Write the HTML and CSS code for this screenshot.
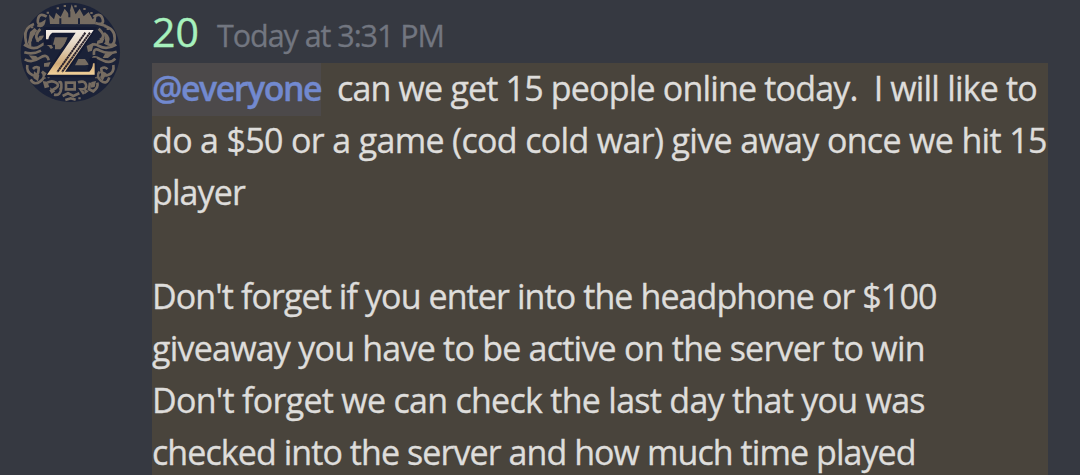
FILE: index.html
```html
<!DOCTYPE html>
<html lang="en">
<head>
<meta charset="utf-8">
<title>Message</title>
<link rel="stylesheet" href="styles.css">
</head>
<body>
<article class="message">
<svg class="avatar" viewBox="0 0 360 330" aria-label="Avatar">
<defs><linearGradient id="gold" x1="0" y1="0" x2="0" y2="1"><stop stop-color="#f4eee8"/><stop offset=".42" stop-color="#dfcdb5"/><stop offset=".75" stop-color="#d0aa78"/><stop offset="1" stop-color="#f1d09a"/></linearGradient></defs>
<circle cx="181" cy="157" r="149" fill="#1b2238"/>
<g class="ornament">
<path class="solid" d="M120 72l-3-29 15 15 6-20 14 13 12-25 13 17 8-30 12 30 12-17 12 23 15-13 12 22 12-12-4 27z"/>
<path d="M151 72V55M178 52V34M207 72V55" stroke="#1b2238" stroke-width="6"/>
<path d="M110 50Q88 36 84 58T102 66Q99 83 82 76M72 72Q43 82 46 113T60 137Q56 115 74 98M91 87Q69 110 87 124M42 134Q72 153 92 137T126 145M43 157Q68 165 93 152M44 178Q66 190 89 174T116 181M52 195Q48 216 67 225T86 203Q76 199 69 207M62 238Q72 258 91 244T96 215L119 232"/>
<path d="M250 51Q272 36 278 57T256 69L288 78M283 78Q315 86 314 115T288 130Q304 115 282 99M266 86Q291 109 270 120M319 134Q290 151 267 138T242 147M320 155Q291 164 270 152T252 165M316 176Q300 194 272 178T250 186M310 195Q314 218 294 225T274 206Q285 198 292 208M298 232Q290 256 273 242T269 215"/>
<path class="solid" d="M60 96l14-12 8 8-13 14-4 18-12 8zM88 108l16-2-10 14-16 6zM56 166l22 2 10 10-18 4zM72 214l16 12-4 18-14-10zM282 102l12 8 4 20-12-4zM262 122l22-8-6 14-18 5zM286 160l22 2-14 12-16 0zM278 214l12 6-12 22-8-10zM98 243l14 2 6 16-14 4zM244 246l14-3-4 18-12 2z"/>
<path d="M112 248Q126 240 138 248T138 264L120 274M132 284Q152 288 154 264T146 248M168 248H194V268H168ZM204 247Q224 240 228 254T212 268L222 282M240 248L237 268 250 274Q266 262 262 248M158 288L174 280 190 288 208 280M166 300L182 295 197 299"/>
<path class="solid" d="M135 110h38l-9 24-13 14h-16v-14h-6zM205 177h20l12 17-12 2h-30zM230 138l20-10-4 24-12 4zM106 112l18-2-6 24h-14zM102 190l20-4-6 14h-14zM120 262l16 12-12 8zM222 264l14 10-12 9z"/>
</g>
<g class="flecks"><path d="M140 25h7M161 18h7M193 19h7M220 27h7M110 38h7M241 39h7M62 82h8M290 87h8M99 233h8M255 232h8M205 295h7M148 266h7"/></g>
<path d="M101 82H262L222 144 176 210H232L240 173H260V232H103L176 112H124V135H101Z" fill="#151b33"/>
<path d="M108 90H251L165 215H238Q248 207 249 190H254V224H111L197 98H127Q117 104 115 118H108Z" fill="url(#gold)"/>
<path d="M226 98L142 216M240 98L156 216" stroke="#29212c" stroke-width="6" stroke-dasharray="7 1"/>
</svg>
<div class="content">
<header class="header"><span class="author">20</span><time class="time">Today at 3:31 PM</time></header>
<div class="body">
<p class="line l1"><span class="mention">@everyone</span><span class="after">can we get 15 people online today.&nbsp; I will like to</span></p>
<p class="line l2">do a $50 or a game (cod cold war) give away once we hit 15</p>
<p class="line l3">player</p>
<p class="line">&nbsp;</p>
<p class="line l5">Don't forget if you enter into the headphone or $100</p>
<p class="line l6">giveaway you have to be active on the server to win</p>
<p class="line l7">Don't forget we can check the last day that you was</p>
<p class="line l8">checked into the server and how much time played</p>
</div>
</div>
</article>
</body>
</html>
```
FILE: styles.css
```css
* { box-sizing: border-box; }
body { margin: 0; height: 475px; overflow: hidden; background: #363941; font-family: "Open Sans", "Noto Sans", sans-serif; }
.message { display: flex; padding-left: 10px; }
.avatar { width: 120px; height: 110px; flex: none; margin-right: 22px; }
.ornament { fill: none; stroke: #766c61; stroke-width: 8; }
.ornament .solid { fill: #766c61; stroke: none; }
.flecks { stroke: #766c61; stroke-width: 6; }
.content { width: 896px; }
.header { height: 63px; display: flex; align-items: baseline; line-height: 63px; white-space: nowrap; }
.author { color: #a7f1bd; font-size: 41px; font-weight: 500; width: 65px; -webkit-text-stroke: .4px; }
.time { color: #727680; font-size: 30.5px; letter-spacing: -1.05px; -webkit-text-stroke: .3px; }
.body { background: #49443c; height: 412px; }
.line { margin: 0; height: 52px; line-height: 50px; font-size: 34px; color: #dedddb; white-space: pre; -webkit-text-stroke: .35px; }
.l1 { display: flex; letter-spacing: -.82px; }
.mention { width: 169px; height: 53px; background: #4c494a; color: #7289cf; font-weight: 600; letter-spacing: -1.5px; }
.after { margin-left: 16px; }
.l2 { letter-spacing: -.66px; }
.l3 { letter-spacing: -.9px; }
.l5 { letter-spacing: -.91px; }
.l6 { letter-spacing: -.77px; }
.l7 { letter-spacing: -.72px; }
.l8 { letter-spacing: -.93px; }
```
